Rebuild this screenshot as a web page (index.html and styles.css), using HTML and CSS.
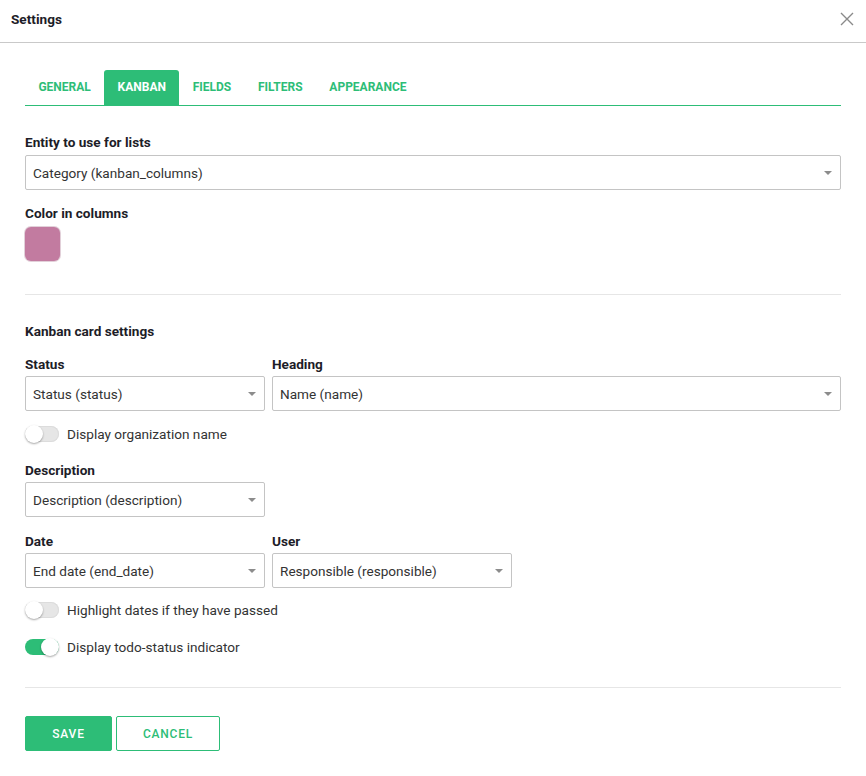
FILE: index.html
```html
<!DOCTYPE html>
<html lang="en">
  <head>
    <meta charset="UTF-8" />
    <meta name="viewport" content="width=device-width, initial-scale=1.0" />
    <title>Settings</title>
    <link rel="stylesheet" href="styles.css">
  </head>

  <body>
    <header class="modal-header">
      <h1 class="modal-title">Settings</h1>
      <button class="close-btn" aria-label="Close">
        <svg width="14" height="14" viewBox="0 0 14 14">
          <path d="M1 1 L13 13 M13 1 L1 13" stroke="#8a8a8a" stroke-width="1.4" fill="none" />
        </svg>
      </button>
    </header>

    <div class="modal-body">
      <nav class="tabs">
        <a class="tab" href="#">General</a>
        <a class="tab active" href="#">Kanban</a>
        <a class="tab" href="#">Fields</a>
        <a class="tab" href="#">Filters</a>
        <a class="tab" href="#">Appearance</a>
      </nav>

      <section class="block">
        <div class="field field-entity">
          <label class="field-label">Entity to use for lists</label>
          <div class="select">Category (kanban_columns)</div>
        </div>

        <div class="field field-color">
          <label class="field-label">Color in columns</label>
          <div class="swatch"></div>
        </div>
      </section>

      <hr class="divider" />

      <section class="block">
        <h2 class="section-title">Kanban card settings</h2>

        <div class="row row-wide">
          <div class="field">
            <label class="field-label">Status</label>
            <div class="select">Status (status)</div>
          </div>
          <div class="field">
            <label class="field-label">Heading</label>
            <div class="select">Name (name)</div>
          </div>
        </div>

        <div class="toggle-row">
          <span class="toggle"></span>
          <span>Display organization name</span>
        </div>

        <div class="row">
          <div class="field">
            <label class="field-label">Description</label>
            <div class="select">Description (description)</div>
          </div>
        </div>

        <div class="row">
          <div class="field">
            <label class="field-label">Date</label>
            <div class="select">End date (end_date)</div>
          </div>
          <div class="field">
            <label class="field-label">User</label>
            <div class="select">Responsible (responsible)</div>
          </div>
        </div>

        <div class="toggle-row tight">
          <span class="toggle"></span>
          <span>Highlight dates if they have passed</span>
        </div>

        <div class="toggle-row last">
          <span class="toggle on"></span>
          <span>Display todo-status indicator</span>
        </div>
      </section>

      <hr class="divider" />

      <div class="actions">
        <button class="btn btn-primary">Save</button>
        <button class="btn btn-outline">Cancel</button>
      </div>
    </div>
  </body>
</html>
```

FILE: styles.css
```css
body {
  font-family: Roboto, "Liberation Sans", Arial, sans-serif;
  margin: 0;
  padding: 0;
  background-color: #fff;
  color: #222;
}

.modal-header {
  box-sizing: border-box;
  height: 43px;
  border-bottom: 1px solid #c9c9c9;
  display: flex;
  align-items: center;
  justify-content: space-between;
  padding: 0 12px 4px 11px;
}

.modal-title {
  margin: 0;
  font-size: 13.6px;
  font-weight: 700;
  color: #1d1d28;
}

.close-btn {
  background: none;
  border: none;
  padding: 0;
  width: 14px;
  height: 14px;
  cursor: pointer;
  display: flex;
}

.modal-body {
  padding: 27px 25px 0 25px;
}

/* tabs */
.tabs {
  display: flex;
  border-bottom: 1px solid #2dbd77;
  height: 35px;
}

.tab {
  display: flex;
  align-items: center;
  padding: 0 13.4px 1px;
  font-size: 12px;
  font-weight: 700;
  text-transform: uppercase;
  color: #2dbd77;
  text-decoration: none;
  border-radius: 3px 3px 0 0;
}

.tab.active {
  background-color: #2dbd77;
  color: #fff;
}

/* fields */
.block {
  padding-top: 28px;
}

.field-label {
  display: block;
  font-size: 13.6px;
  font-weight: 700;
  color: #1d1d28;
  line-height: 16px;
  margin-bottom: 4px;
}

.field {
  margin-bottom: 15px;
}

.field-entity .field-label {
  margin-bottom: 5px;
}

.field-color {
  margin-bottom: 33px;
}

.select {
  position: relative;
  box-sizing: border-box;
  height: 35px;
  border: 1px solid #c4c4c4;
  border-radius: 2px;
  padding: 0 30px 0 7px;
  display: flex;
  align-items: center;
  font-size: 13.6px;
  color: #333;
  background: #fff;
}

.select::after {
  content: "";
  position: absolute;
  right: 8px;
  top: 15px;
  border-left: 4px solid transparent;
  border-right: 4px solid transparent;
  border-top: 4px solid #8c8c8c;
}

.swatch {
  width: 35px;
  height: 34px;
  border-radius: 6px;
  background-color: #c27ba0;
  box-shadow: 0 0 0 1px #e2d0d9;
  margin-top: 6px;
}

.divider {
  border: none;
  border-top: 1px solid #e6e6e6;
  margin: 0;
}

.section-title {
  margin: 0 0 17px;
  font-size: 13.6px;
  font-weight: 700;
  color: #1d1d28;
  line-height: 16px;
}

.row {
  display: grid;
  grid-template-columns: 240px 240px;
  column-gap: 7px;
}

.row-wide {
  grid-template-columns: 240px 1fr;
}

.row .field {
  margin-bottom: 16px;
}

/* toggles */
.toggle-row {
  display: flex;
  align-items: center;
  gap: 8px;
  font-size: 13.6px;
  color: #333;
  height: 18px;
  margin-top: -2px;
  margin-bottom: 19px;
}

.toggle-row.tight {
  margin-top: -3px;
}

.toggle-row + .toggle-row {
  margin-top: 0;
  margin-bottom: 18px;
}

.toggle-row.last {
  margin-bottom: 31px;
}

.toggle {
  position: relative;
  width: 34px;
  height: 16px;
  border-radius: 8px;
  background-color: #e6e6e6;
  box-shadow: inset 0 0 0 1px #dcdcdc;
}

.toggle::after {
  content: "";
  position: absolute;
  left: 0;
  top: -1px;
  width: 18px;
  height: 18px;
  border-radius: 50%;
  background: #fff;
  box-shadow: 0 1px 2px rgba(0, 0, 0, 0.35);
}

.toggle.on {
  background-color: #2dbd77;
  box-shadow: none;
}

.toggle.on::after {
  left: 16px;
}

/* buttons */
.actions {
  display: flex;
  gap: 4px;
  padding-top: 28px;
}

.btn {
  height: 35px;
  font-family: inherit;
  font-size: 12px;
  font-weight: 500;
  letter-spacing: 0.8px;
  text-transform: uppercase;
  border-radius: 2px;
  cursor: pointer;
}

.btn-primary {
  width: 87px;
  background-color: #2dbd77;
  border: 1px solid #2dbd77;
  color: #fff;
}

.btn-outline {
  width: 104px;
  background-color: #fff;
  border: 1px solid #2dbd77;
  color: #2dbd77;
}
```
